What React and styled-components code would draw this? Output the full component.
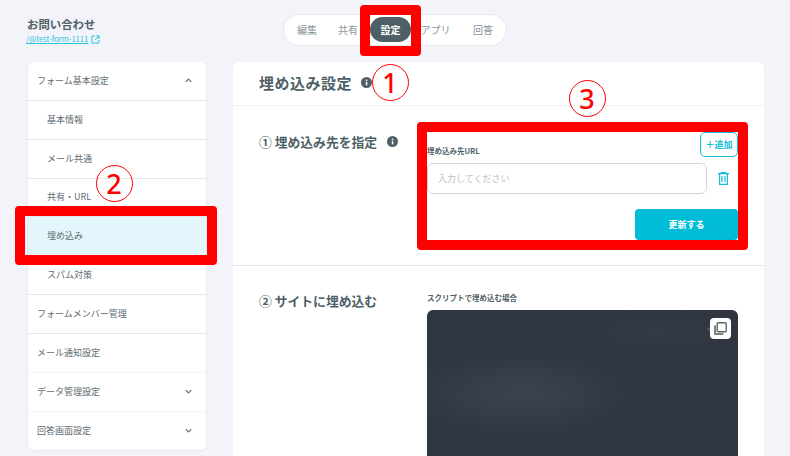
import React from "react";
import styled, { createGlobalStyle } from "styled-components";

const Global = createGlobalStyle`
  html, body { margin: 0; padding: 0; height: 456px; overflow: hidden; background: #f3f4f9; }
  body { font-family: "Noto Sans CJK JP", "Noto Sans", sans-serif; color: #4f5f67; }
  * { box-sizing: border-box; }
`;

const Page = styled.div`
  position: relative; width: 790px; height: 456px; overflow: hidden; background: #f3f4f9;
`;
const Header = styled.header`
  display: flex; height: 62px; padding: 14px 0 0 27px;
`;
const TitleBlock = styled.div`
  width: 256px; display: flex; flex-direction: column; padding-top: 2px;
`;
const FormName = styled.h1`
  margin: 0; font-size: 11.4px; line-height: 17px; font-weight: 700; color: #4f5f67;
`;
const FormLink = styled.a`
  display: flex; align-items: center; gap: 3px; font-size: 7.6px; line-height: 12px; color: #22c3dc; margin-left: -1px;
  span { text-decoration: underline; }
`;
const Tabs = styled.nav`
  width: 224px; height: 32px; display: flex; align-items: center; padding: 0 4px 1px 13px;
  background: #fff; border: 1px solid #e6e8ec; border-radius: 16px;
`;
const Tab = styled.span`
  font-size: 10px; line-height: 25px; color: #8b969c; height: 25px; text-align: center; flex: none;
  width: ${p => p.$w}px; margin-right: ${p => p.$mr}px;
  ${p => p.$active && `background:#4f5f67;color:#fff;font-weight:700;border-radius:13px;`}
`;
const Body = styled.div`
  display: flex; align-items: flex-start; gap: 26px; padding-left: 27px;
`;
const Sidebar = styled.aside`
  width: 180px; height: 389px; flex: none; background: #fff; border: 1px solid #e8eaee; border-width: 0 1px 1px; border-radius: 7px; overflow: hidden;
`;
const Row = styled.div`
  height: 38.85px; display: flex; align-items: center; justify-content: space-between;
  padding: 0 13px 1px ${p => (p.$sub ? 19 : 9)}px; font-size: 9px; color: #5d6b73;
  background: ${p => (p.$active ? "#e3f6fb" : "#fff")};
  border-bottom: 1px solid ${p => (p.$faint ? "#f3f4f6" : p.$last ? "transparent" : "#e4e7ea")};
`;
const Main = styled.main`
  width: 531px; height: 400px; flex: none; background: #fff; border-radius: 7px 7px 0 0;
`;
const MainHead = styled.div`
  height: 44px; display: flex; align-items: center; gap: 9px; padding: 0 0 2px 26px; border-bottom: 1px solid #f0f1f3;
  h2 { margin: 0; font-size: 15px; letter-spacing: .5px; font-weight: 700; color: #4f5f67; line-height: 20px; }
`;
const Section = styled.section`
  display: grid; grid-template-columns: 168px 311px; padding: ${p => p.$pt}px 0 0 26px; height: ${p => p.$h}px;
  border-bottom: ${p => (p.$line ? "1px solid #e4e6e9" : "none")};
`;
const SectionTitle = styled.h3`
  margin: ${p => p.$mt || 0}px 0 0; display: flex; align-items: center; gap: 10px; height: 20px; font-size: 12.8px; font-weight: 700; color: #4f5f67;
`;
const FieldHead = styled.div`
  display: flex; justify-content: space-between; height: 31px;
`;
const Label = styled.label`
  display: block; font-size: 7.5px; font-weight: 700; line-height: 12px; color: #4f5f67; padding-top: ${p => p.$pt || 0}px;
`;
const AddButton = styled.button`
  width: 38px; height: 25px; padding: 0; background: #fff; border: 1px solid #14bcd6; border-radius: 5px;
  color: #14bcd6; font: 700 9px "Noto Sans CJK JP", sans-serif; white-space: nowrap;
`;
const InputRow = styled.div`
  display: flex; align-items: center; gap: 11px;
`;
const Input = styled.input`
  width: 280px; height: 31px; border: 1px solid #d3d6d9; border-radius: 6px; padding: 0 10px;
  font: 9px "Noto Sans CJK JP", sans-serif;
  &::placeholder { color: #bcc1c5; }
`;
const Actions = styled.div`
  display: flex; justify-content: flex-end; margin-top: 15px;
`;
const Submit = styled.button`
  width: 103px; height: 31px; padding: 0; border: 0; border-radius: 4px; background: #00bcd6; color: #fff;
  font: 700 9px "Noto Sans CJK JP", sans-serif;
`;
const Code = styled.div`
  position: relative; width: 311px; height: 170px; margin-top: 6px; border-radius: 6px; overflow: hidden;
  background:
    radial-gradient(ellipse 115px 44px at 95px 84px, #3d434c 0%, #383e48 45%, rgba(50,55,65,0) 100%),
    radial-gradient(ellipse 90px 24px at 230px 22px, #353b45 0%, rgba(50,55,65,0) 100%),
    #30363f;
`;
const Caret = styled.span`
  position: absolute; top: 14px; right: 27px; font-size: 7px; line-height: 10px; color: #66727f;
`;
const CopyButton = styled.button`
  position: absolute; top: 8px; right: 7px; width: 21px; height: 21px; padding: 0; border: 0; border-radius: 4px; background: #fff;
  display: flex; align-items: center; justify-content: center;
`;
const Annotation = styled.div`
  position: absolute; left: ${p => p.$x}px; top: ${p => p.$y}px; width: ${p => p.$w}px; height: ${p => p.$h}px;
  border: 10px solid #ff0000; border-radius: 4px; pointer-events: none;
`;
const Badge = styled.div`
  position: absolute; left: ${p => p.$x - 18.5}px; top: ${p => p.$y - 18.5}px; width: 37px; height: 37px; border-radius: 50%;
  border: 1px solid #ff0000; color: #ff0000;
  display: flex; align-items: center; justify-content: center; font: 500 27px/1 "Noto Sans", sans-serif;
`;

const Chevron = ({ up }) => (
  <svg width="9" height="9" viewBox="0 0 10 10" fill="none" stroke="#5d6b73" strokeWidth="1.3">
    <path d={up ? "M2 6.5 5 3.5 8 6.5" : "M2 3.5 5 6.5 8 3.5"} />
  </svg>
);
const Info = () => (
  <svg width="11" height="11" viewBox="0 0 11 11">
    <circle cx="5.5" cy="5.5" r="5.5" fill="#4f5f67" />
    <rect x="4.8" y="4.8" width="1.5" height="3.6" fill="#fff" />
    <rect x="4.8" y="2.6" width="1.5" height="1.4" fill="#fff" />
  </svg>
);
const External = () => (
  <svg width="9" height="9" viewBox="0 0 10 10" fill="none" stroke="#22c3dc" strokeWidth="1.1">
    <path d="M4.5 1.2H1v7.8h7.8V5.5M5.8 1h3.2v3.2M9 1 4.5 5.5" />
  </svg>
);
const Trash = () => (
  <svg width="11" height="13" viewBox="0 0 11 13" fill="none" stroke="#14bcd6" strokeWidth="1.2">
    <path d="M0 1.6h11M3.4 1.6V.6h4.2v1M1.6 1.6v10.8h7.8V1.6M4 4v6M7 4v6" />
  </svg>
);
const Copy = () => (
  <svg width="13" height="13" viewBox="0 0 13 13">
    <path d="M0 3.5h2v7.5h7.5v2H1a1 1 0 0 1-1-1z" fill="#7d8488" />
    <rect x="3.2" y=".7" width="9" height="9" rx="1" fill="#fff" stroke="#5b666c" strokeWidth="1.4" />
  </svg>
);

export default function App() {
  return (
    <Page>
      <Global />
      <Header>
        <TitleBlock>
          <FormName>お問い合わせ</FormName>
          <FormLink><span>/@test-form-1111</span><External /></FormLink>
        </TitleBlock>
        <Tabs>
          <Tab $w={20} $mr={21}>編集</Tab>
          <Tab $w={20} $mr={12}>共有</Tab>
          <Tab $w={41} $mr={9} $active>設定</Tab>
          <Tab $w={31} $mr={22}>アプリ</Tab>
          <Tab $w={20} $mr={0}>回答</Tab>
        </Tabs>
      </Header>
      <Body>
        <Sidebar>
          <Row>フォーム基本設定<Chevron up /></Row>
          <Row $sub>基本情報</Row>
          <Row $sub>メール共通</Row>
          <Row $sub>共有・URL</Row>
          <Row $sub $active>埋め込み</Row>
          <Row $sub>スパム対策</Row>
          <Row>フォームメンバー管理</Row>
          <Row $faint>メール通知設定</Row>
          <Row $faint>データ管理設定<Chevron /></Row>
          <Row $last>回答画面設定<Chevron /></Row>
        </Sidebar>
        <Main>
          <MainHead><h2>埋め込み設定</h2><Info /></MainHead>
          <Section $pt={26} $h={160} $line>
            <SectionTitle $mt={-1}>① 埋め込み先を指定<Info /></SectionTitle>
            <div>
              <FieldHead>
                <Label $pt={13}>埋め込み先URL</Label>
                <AddButton>＋追加</AddButton>
              </FieldHead>
              <InputRow>
                <Input placeholder="入力してください" />
                <Trash />
              </InputRow>
              <Actions><Submit>更新する</Submit></Actions>
            </div>
          </Section>
          <Section $pt={26} $h={200}>
            <SectionTitle $mt={-2}>② サイトに埋め込む</SectionTitle>
            <div>
              <Label>スクリプトで埋め込む場合</Label>
              <Code>
                <Caret>&gt;</Caret>
                <CopyButton aria-label="コピー"><Copy /></CopyButton>
              </Code>
            </div>
          </Section>
        </Main>
      </Body>
      <Annotation $x={360} $y={5} $w={61} $h={51} />
      <Annotation $x={15} $y={206} $w={202} $h={59} />
      <Annotation $x={417} $y={122} $w={331} $h={128} />
      <Badge $x={390} $y={82}>1</Badge>
      <Badge $x={114} $y={183}>2</Badge>
      <Badge $x={587} $y={98}>3</Badge>
    </Page>
  );
}
